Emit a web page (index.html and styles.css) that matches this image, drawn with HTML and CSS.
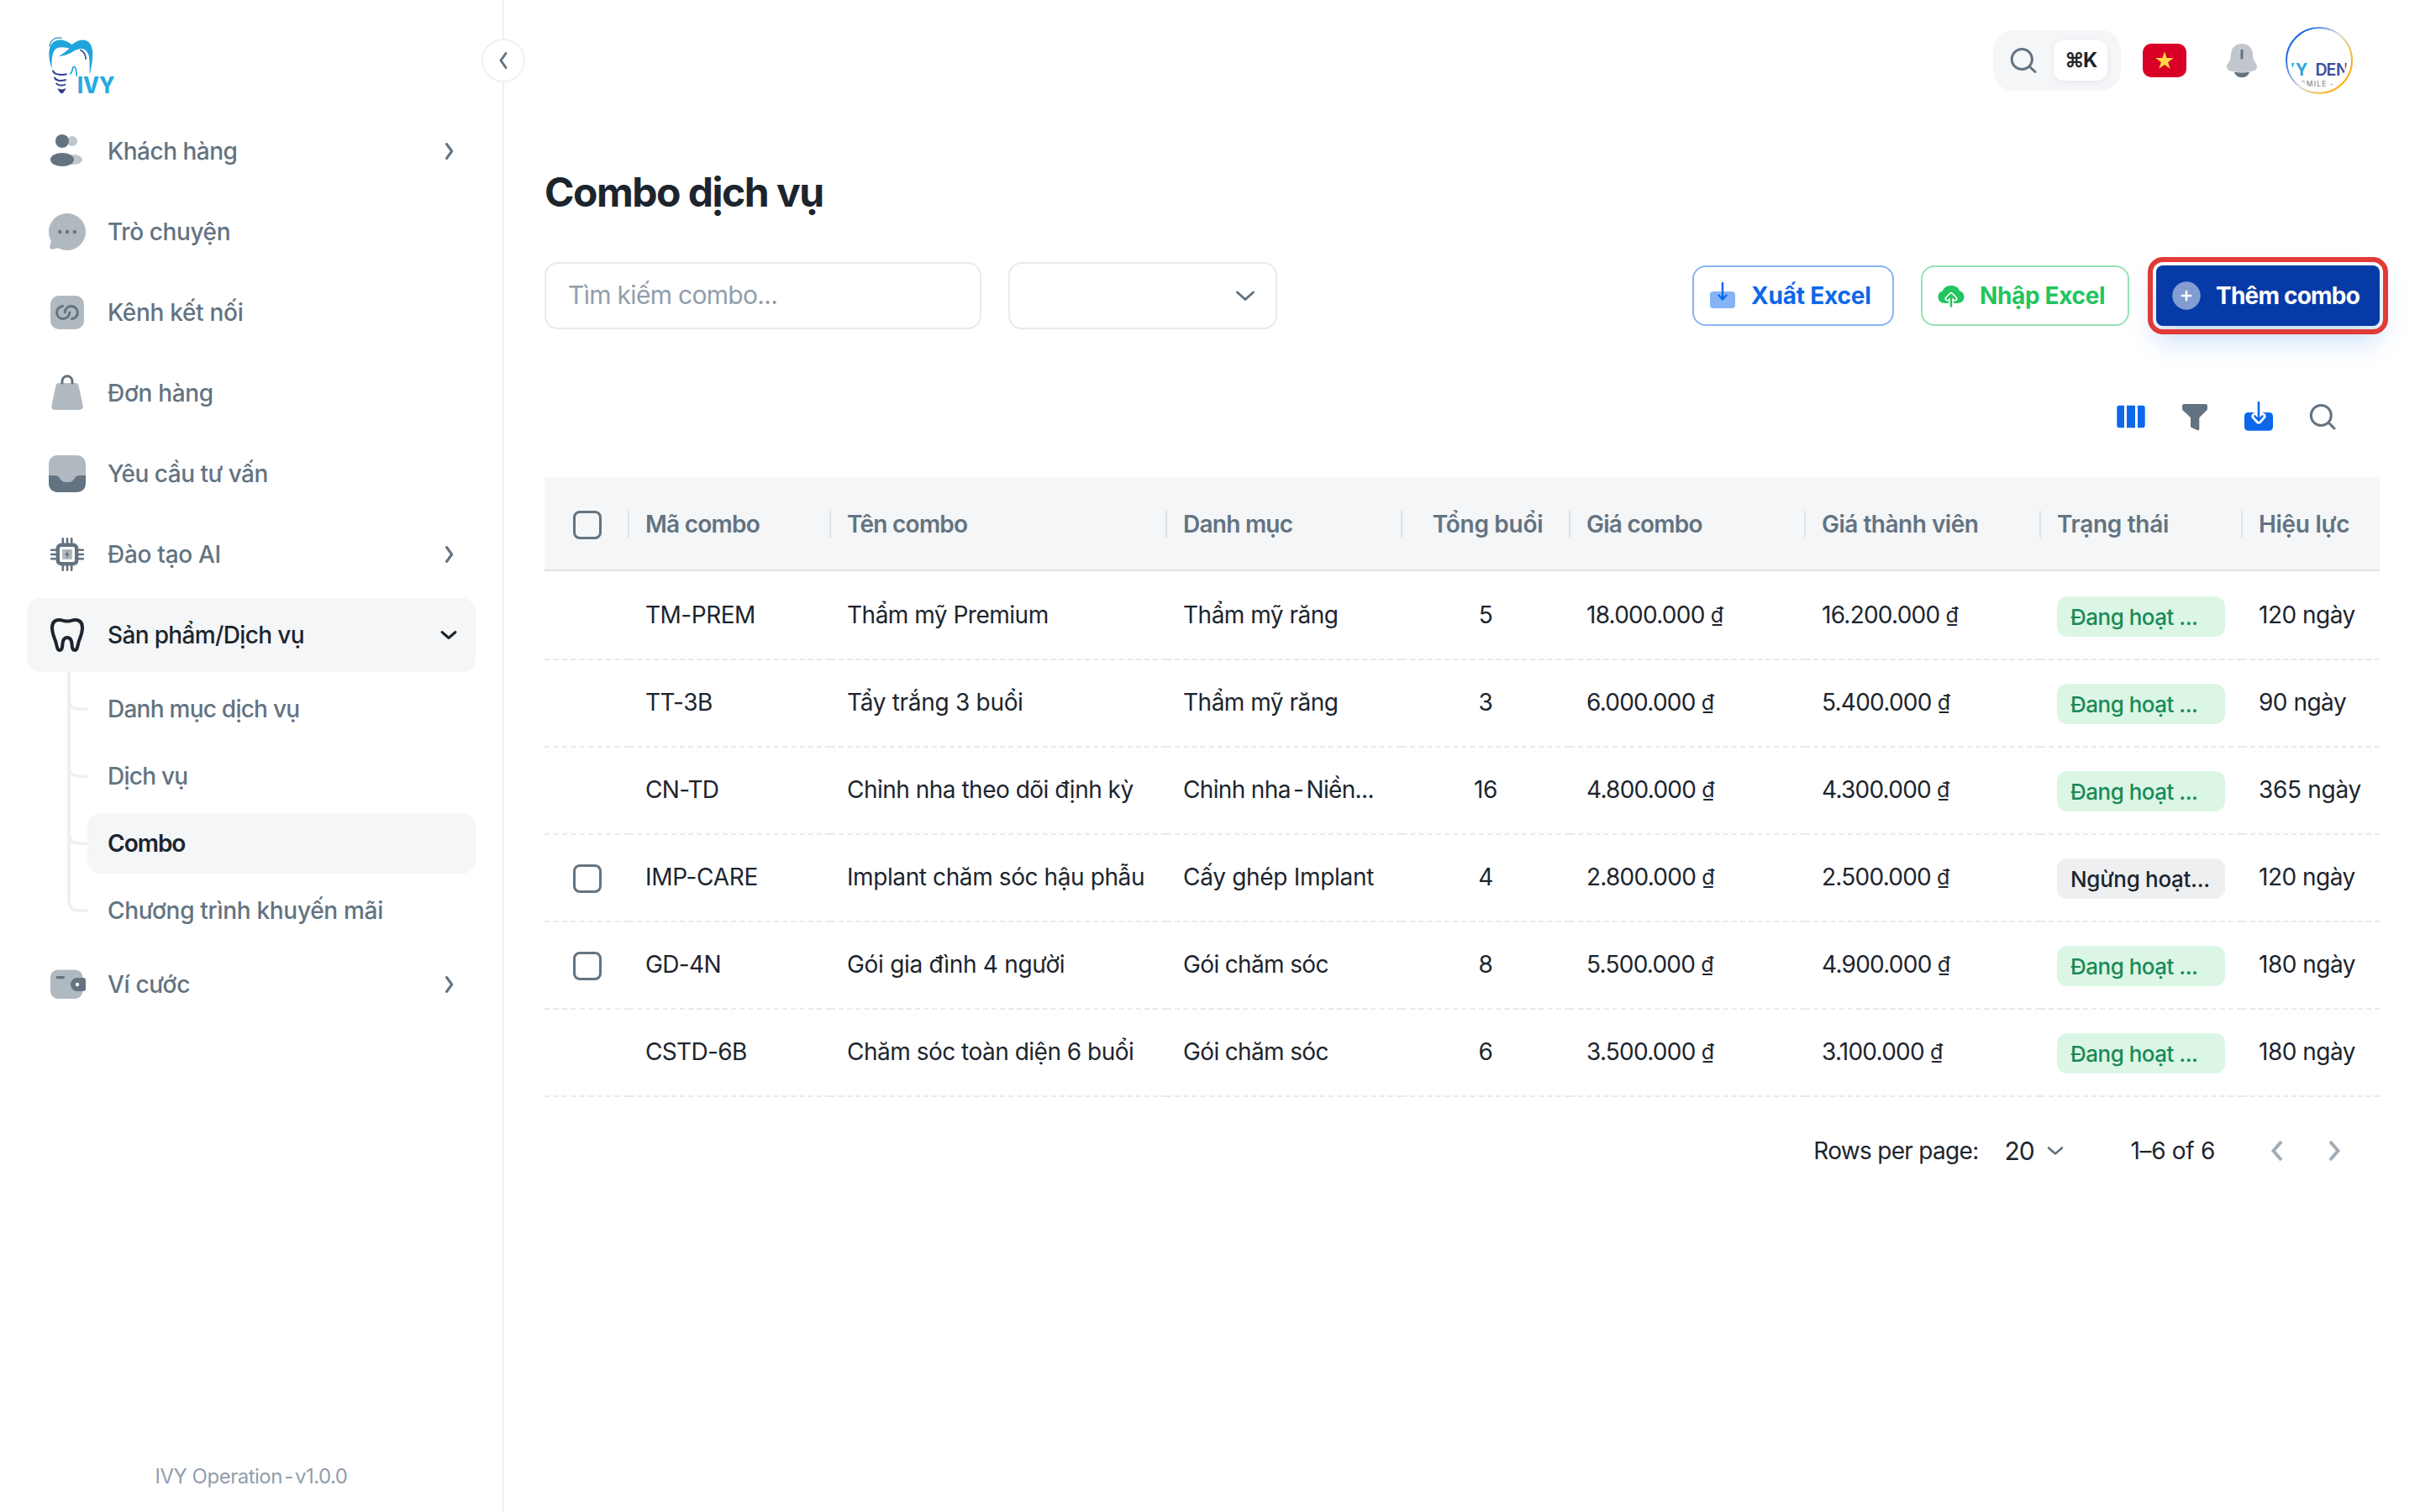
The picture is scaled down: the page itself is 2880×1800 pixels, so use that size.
FILE: index.html
```html
<!DOCTYPE html>
<html lang="vi">
<head>
<meta charset="utf-8">
<title>Combo dịch vụ</title>
<link rel="stylesheet" href="styles.css">
</head>
<body>
<div class="app">
  <aside class="sidebar">
    <svg class="logo" viewBox="0 0 300 252">
      <path fill="#1ea5dc" d="M42 138C27 100 26 55 50 40c22-12 46-2 62 12 20-18 44-24 61-10 19 18 17 62 3 116 0-46 2-72-14-86-20-16-42 4-62 13-12 6-26 9-34 7 16-6 24-18 38-26-14-5-42-10-54 6-10 18-10 43-8 66z"/>
      <path fill="none" stroke="#2a93b8" stroke-width="4" d="M33 58c3-22 20-36 44-30"/>
      <path fill="none" stroke="#2f4b9b" stroke-width="5" d="M142 70c13 6 20 18 21 34"/>
      <path fill="none" stroke="#1ea5dc" stroke-width="5" d="M106 156c10-6 8-26 14-26s9 14 10 34"/>
      <path fill="none" stroke="#2f3f8f" stroke-width="6" d="M45 143c1 15 24 18 50 14M50 168c6 13 24 14 42 9M56 189c8 10 22 9 34 5"/>
      <path fill="#2f3f8f" d="M61 207c10 5 20 5 31-1-5 12-11 20-16 20-6-2-11-10-15-19z"/>
      <text class="logo-word" x="132" y="226" textLength="134" lengthAdjust="spacingAndGlyphs">IVY</text>
    </svg>
    <nav class="nav">
      <a class="item"><svg class="ico" viewBox="0 0 24 24"><g opacity=".4"><circle cx="15" cy="6" r="3"/><ellipse cx="16" cy="17" rx="5" ry="3"/></g><circle cx="9" cy="6" r="4"/><ellipse cx="9" cy="17" rx="7" ry="4"/></svg><span>Khách hàng</span><svg class="chev" viewBox="0 0 32 32"><path d="M13.500 7.500l6.200 8.500-6.200 8.500"/></svg></a>
      <a class="item"><svg class="ico" viewBox="0 0 24 24"><g transform="translate(-1.2 -1.2) scale(1.1)"><path opacity=".5" d="M12 22c5.523 0 10-4.477 10-10S17.523 2 12 2 2 6.477 2 12c0 1.6.376 3.112 1.043 4.453.178.356.237.763.134 1.148l-.595 2.226a1.3 1.3 0 0 0 1.591 1.592l2.226-.596a1.63 1.63 0 0 1 1.149.133A9.96 9.96 0 0 0 12 22"/><circle cx="8" cy="12" r="1"/><circle cx="12" cy="12" r="1"/><circle cx="16" cy="12" r="1"/></g></svg><span class="t1">Trò chuyện</span></a>
      <a class="item"><svg class="ico" viewBox="0 0 24 24"><rect opacity=".5" x="2" y="2" width="20" height="20" rx="5"/><path class="ln" d="M9.200 8.200A3.800 3.800 0 1 0 13.400 12M14.800 15.800A3.800 3.800 0 1 0 10.600 12"/></svg><span class="t0">Kênh kết nối</span></a>
      <a class="item"><svg class="ico" viewBox="0 0 24 24"><path opacity=".5" d="M7.200 6h9.600c1.200 0 1.800.6 2 1.600l2.500 11.800c.3 1.600-.5 2.600-2.200 2.600H4.900c-1.700 0-2.500-1-2.200-2.600L5.200 7.600c.2-1 .8-1.600 2-1.600z"/><path class="ln" d="M9 6V4.900a3 3 0 0 1 6 0V6"/></svg><span class="t0">Đơn hàng</span></a>
      <a class="item"><svg class="ico" viewBox="0 0 24 24"><rect opacity=".5" x="1" y="1" width="22" height="22" rx="5"/><path d="M1 13h3.500c1.300 0 2 .4 2.700 1.300l1.300 1.600c.7.8 1.300 1.100 2.300 1.100h2.400c1 0 1.600-.3 2.300-1.100l1.300-1.600c.7-.9 1.400-1.300 2.700-1.300H23v4c0 4-2 6-6 6H7c-4 0-6-2-6-6z"/></svg><span>Yêu cầu tư vấn</span></a>
      <a class="item"><svg class="ico" viewBox="0 0 24 24"><rect x="6.400" y="6.400" width="11.200" height="11.200" rx="2" fill="none" stroke="#637381" stroke-width="2.200"/><path class="ln pins" d="M9.400 2.600v3M12 2.600v3M14.600 2.600v3M9.400 18.400v3M12 18.400v3M14.600 18.400v3M2.600 9.400h3M2.600 12h3M2.600 14.600h3M18.400 9.400h3M18.400 12h3M18.400 14.600h3"/><rect opacity=".5" x="9" y="9" width="6" height="6" rx=".5"/><path d="M12.600 9.400l-2.100 3h1.300l-.5 2.300 2.200-3.100h-1.300z"/></svg><span class="t0">Đào tạo AI</span><svg class="chev" viewBox="0 0 32 32"><path d="M13.500 7.500l6.200 8.500-6.200 8.500"/></svg></a>
      <a class="item open"><svg class="ico" viewBox="0 0 24 24"><path fill="none" stroke="#1c252e" stroke-width="2" stroke-linejoin="round" d="M7.200 3C4 3 3 5.300 3 7.800c0 3.700 1.500 5.700 2.300 8.700.6 2.500.8 4.500 2.200 4.500 1.600 0 1.500-1.800 1.800-4.200.2-1.900 1-3.300 2.700-3.300s2.500 1.400 2.700 3.300c.3 2.400.2 4.200 1.800 4.200 1.400 0 1.600-2 2.200-4.500.8-3 2.300-5 2.300-8.700C21 5.300 20 3 16.800 3c-1.900 0-3 .8-4.800.8S9.100 3 7.200 3z"/></svg><span class="t3">Sản phẩm/Dịch vụ</span><svg class="chev" viewBox="0 0 32 32"><path d="M8 12.500l8 7 8-7"/></svg></a>
      <div class="sub">
        <a class="subitem"><svg class="branch" viewBox="0 0 24 16"><path d="M2 0c0 8 4 12 12 12h10"/></svg><span class="t2">Danh mục dịch vụ</span></a>
        <a class="subitem"><svg class="branch" viewBox="0 0 24 16"><path d="M2 0c0 8 4 12 12 12h10"/></svg><span class="t2">Dịch vụ</span></a>
        <a class="subitem current"><svg class="branch" viewBox="0 0 24 16"><path d="M2 0c0 8 4 12 12 12h10"/></svg><span>Combo</span></a>
        <a class="subitem"><svg class="branch" viewBox="0 0 24 16"><path d="M2 0c0 8 4 12 12 12h10"/></svg><span class="t0">Chương trình khuyến mãi</span></a>
      </div>
      <a class="item"><svg class="ico" viewBox="0 0 24 24"><rect opacity=".5" x="2" y="3.200" width="19.200" height="17.300" rx="4.500"/><path d="M6 7h3.800a.8.8 0 0 1 0 1.600H6A.8.8 0 0 1 6 7zM18 8h3.500c.9 0 1.500.6 1.500 1.500v5c0 .9-.6 1.500-1.500 1.500H18a4 4 0 0 1 0-8z"/><circle cx="18" cy="12" r="1.100" fill="#fff"/></svg><span class="t0">Ví cước</span><svg class="chev" viewBox="0 0 32 32"><path d="M13.500 7.500l6.200 8.500-6.200 8.500"/></svg></a>
    </nav>
    <footer class="version">IVY Operation<span class="dash"> - </span>v1.0.0</footer>
    <button class="toggle"><svg viewBox="0 0 32 32"><path d="M19 7.500L13 16l6 8.500"/></svg></button>
  </aside>

  <div class="page">
    <header class="topbar">
      <div class="search"><svg class="mag" viewBox="0 0 40 40"><circle cx="18.300" cy="18.500" r="12.100"/><path d="M27 27l7 6.500"/></svg><kbd>⌘K</kbd></div>
      <svg class="flag" viewBox="0 0 52 40"><rect width="52" height="40" rx="10" fill="#d80027"/><path fill="#ffda44" d="M26 9.300l2.500 7.800h8.200l-6.600 4.800 2.500 7.800-6.600-4.800-6.600 4.800 2.500-7.800-6.600-4.800h8.200z"/></svg>
      <svg class="bell" viewBox="0 0 48 48"><path fill="#c1c7cd" d="M24 4c7.500 0 12.500 5 13 12 .4 5 .6 7.500 3 10.500 3.500 4.500 2.300 9.300-3.500 10.300-8 1.600-17 1.600-25 0-5.800-1-7-5.800-3.500-10.300 2.400-3 2.600-5.500 3-10.500C11.500 9 16.500 4 24 4z"/><path fill="#637381" d="M15 37.800c6 .8 12 .8 18 0-1 4-4.500 6.400-9 6.400s-8-2.400-9-6.400z"/><path stroke="#637381" stroke-width="3" stroke-linecap="round" d="M24 12v9"/></svg>
      <svg class="avatar" viewBox="0 0 80 80">
        <defs><linearGradient id="ring" x1=".1" y1=".2" x2=".9" y2=".8"><stop offset=".05" stop-color="#1668e3"/><stop offset=".5" stop-color="#dcdcda"/><stop offset=".95" stop-color="#ffab00"/></linearGradient><clipPath id="disc"><circle cx="40" cy="40" r="33"/></clipPath></defs>
        <circle cx="40" cy="40" r="39" fill="#fff" stroke="url(#ring)" stroke-width="2"/>
        <g clip-path="url(#disc)"><text class="av-cyan" x="-4 12" y="58">VY</text><text class="av-navy" x="35.500 48.500 60" y="58">DEN</text><text class="av-gray" x="18" y="70.500">SMILE -</text></g>
      </svg>
    </header>

    <main class="content">
      <h1>Combo dịch vụ</h1>
      <div class="filters">
        <div class="field query">Tìm kiếm combo...</div>
        <div class="field select"><svg viewBox="0 0 32 32"><path d="M6.500 12l9.500 8.500 9.500-8.500"/></svg></div>
        <div class="actions">
          <button class="btn export"><svg viewBox="0 0 40 40"><rect opacity=".5" x="5" y="15" width="30" height="20" rx="4"/><path fill="none" stroke="currentColor" stroke-width="2.400" stroke-linecap="round" stroke-linejoin="round" d="M20 5v19M15.500 19.500l4.500 5 4.500-5"/></svg>Xuất Excel</button>
          <button class="btn import"><svg viewBox="0 0 40 40"><path d="M12.500 29C8 29 4.500 26 4.500 21.500c0-3.700 2.300-6.300 5.500-7.200C10.800 10.500 15 8 20 8s9.200 2.500 10 6.300c3.200.9 5.500 3.500 5.500 7.200 0 4.500-3.500 7.500-8 7.500z"/><path fill="none" stroke="#fff" stroke-width="6" stroke-linecap="round" stroke-linejoin="round" d="M20 32V20M15.500 23.500L20 19l4.500 4.500"/><path fill="none" stroke="currentColor" stroke-width="2.600" stroke-linecap="round" stroke-linejoin="round" d="M20 32.500V20M15.500 23.500L20 19l4.500 4.500"/></svg>Nhập Excel</button>
          <button class="btn add"><svg viewBox="0 0 40 40"><circle opacity=".5" cx="20" cy="20" r="16.700"/><path stroke="#fff" stroke-width="2.500" stroke-linecap="round" d="M20 14.700v10.600M14.700 20h10.600"/></svg>Thêm combo</button>
        </div>
      </div>

      <div class="toolbar">
        <svg class="blue" viewBox="0 0 40 40"><path d="M12 6.700v26.600H6a2.700 2.700 0 0 1-2.700-2.700V9.400A2.700 2.700 0 0 1 6 6.700zM15 6.700h10v26.600H15zM28 6.700h6a2.700 2.700 0 0 1 2.700 2.700v21.200a2.700 2.700 0 0 1-2.700 2.700h-6z"/></svg>
        <svg viewBox="0 0 40 40"><path d="M7 5h26q2 0 2 2v3.500c0 1-.3 1.700-1 2.300l-7 6.700c-1.200 1-1.700 1.700-1.700 3v12.500c0 1-.8 1.500-1.800 1.200l-7-3c-1-.4-1.500-1-1.500-2v-8.700c0-1.300-.5-2-1.700-3L6 12.800c-.7-.6-1-1.300-1-2.300V7q0-2 2-2z"/></svg>
        <svg class="blue" viewBox="0 0 40 40"><rect x="3" y="15" width="34" height="21.700" rx="4.500"/><path fill="none" stroke="#fff" stroke-width="8" stroke-linecap="round" stroke-linejoin="round" d="M20 16v8.500M15.500 19.500l4.500 5 4.500-5"/><path fill="none" stroke="currentColor" stroke-width="2.600" stroke-linecap="round" stroke-linejoin="round" d="M20 3v21.500M15.500 19.500l4.500 5 4.500-5"/></svg>
        <svg class="mag" viewBox="0 0 40 40"><circle cx="18.300" cy="18.500" r="12"/><path d="M27 27l7 7"/></svg>
      </div>

      <div class="table">
        <div class="row head"><div><i class="box"></i></div><div class="t2">Mã combo</div><div class="t2">Tên combo</div><div class="t2">Danh mục</div><div class="num t0">Tổng buổi</div><div class="t2">Giá combo</div><div>Giá thành viên</div><div class="t0">Trạng thái</div><div class="t0">Hiệu lực</div></div>
        <div class="row first"><div></div><div>TM-PREM</div><div>Thẩm mỹ Premium</div><div>Thẩm mỹ răng</div><div class="num">5</div><div class="t2">18.000.000 <small>₫</small></div><div class="t2">16.200.000 <small>₫</small></div><div><b class="tag">Đang hoạt ...</b></div><div>120 ngày</div></div>
        <div class="row"><div></div><div>TT-3B</div><div class="t0">Tẩy trắng 3 buổi</div><div>Thẩm mỹ răng</div><div class="num">3</div><div class="t2">6.000.000 <small>₫</small></div><div class="t2">5.400.000 <small>₫</small></div><div><b class="tag">Đang hoạt ...</b></div><div>90 ngày</div></div>
        <div class="row"><div></div><div class="t3">CN-TD</div><div>Chỉnh nha theo dõi định kỳ</div><div class="t3">Chỉnh nha<span class="dash"> - </span>Niền...</div><div class="num">16</div><div class="t2">4.800.000 <small>₫</small></div><div class="t2">4.300.000 <small>₫</small></div><div><b class="tag">Đang hoạt ...</b></div><div class="t0">365 ngày</div></div>
        <div class="row"><div><i class="box"></i></div><div class="t0">IMP-CARE</div><div class="t1">Implant chăm sóc hậu phẫu</div><div class="t0">Cấy ghép Implant</div><div class="num">4</div><div class="t2">2.800.000 <small>₫</small></div><div class="t2">2.500.000 <small>₫</small></div><div><b class="tag off t0">Ngừng hoạt...</b></div><div>120 ngày</div></div>
        <div class="row"><div><i class="box"></i></div><div class="t3">GD-4N</div><div class="t0">Gói gia đình 4 người</div><div class="t3">Gói chăm sóc</div><div class="num">8</div><div class="t2">5.500.000 <small>₫</small></div><div class="t2">4.900.000 <small>₫</small></div><div><b class="tag">Đang hoạt ...</b></div><div>180 ngày</div></div>
        <div class="row"><div></div><div class="t3">CSTD-6B</div><div>Chăm sóc toàn diện 6 buổi</div><div class="t3">Gói chăm sóc</div><div class="num">6</div><div class="t2">3.500.000 <small>₫</small></div><div class="t2">3.100.000 <small>₫</small></div><div><b class="tag">Đang hoạt ...</b></div><div>180 ngày</div></div>
        <div class="row end"><div></div><div></div><div></div><div></div><div></div><div></div><div></div><div></div><div></div></div>
      </div>

      <div class="pager">
        <span class="rpp">Rows per page:</span>
        <span class="size">20</span>
        <svg class="caret" viewBox="0 0 24 24"><path d="M4 8.500l8 7 8-7"/></svg>
        <span class="range">1–6 of 6</span>
        <svg class="arrow" viewBox="0 0 40 40"><path d="M25 9L15.500 20 25 31"/></svg>
        <svg class="arrow" viewBox="0 0 40 40"><path d="M15 9l9.500 11L15 31"/></svg>
      </div>
    </main>
  </div>
</div>
</body>
</html>
```
FILE: styles.css
```css
* { box-sizing: border-box; }
body {
  margin: 0;
  background: #fff;
  color: #1c252e;
  font: 400 28px/44px Inter, "Noto Sans", sans-serif;
  letter-spacing: -0.5px;
}
svg { display: block; flex: none; }
button { font: inherit; letter-spacing: inherit; }
.app { display: flex; width: 2880px; height: 1800px; overflow: hidden; }
.t0 { letter-spacing: -0.3px; }
.t1 { letter-spacing: -0.4px; }
.t2 { letter-spacing: -0.75px; }
.t3 { letter-spacing: -0.65px; }
.dash { word-spacing: -4px; }

/* Sidebar */
.sidebar {
  position: relative;
  display: flex;
  flex-direction: column;
  width: 600px;
  flex: none;
  padding: 36px 32px 24px;
  border-right: 2px solid #eff1f3;
}
.logo { width: 100px; height: 84px; margin-left: 16px; }
.logo-word { font: 800 80px Inter, sans-serif; fill: #2aa9df; letter-spacing: 0; }
.nav { display: flex; flex-direction: column; gap: 8px; margin-top: 16px; }
.item {
  display: flex;
  align-items: center;
  gap: 24px;
  height: 88px;
  padding: 0 16px 0 24px;
  border-radius: 16px;
  color: #637381;
  font-weight: 500;
}
.ico { width: 48px; height: 48px; fill: #637381; }
.ln { fill: none; stroke: #637381; stroke-width: 1.5; stroke-linecap: round; }
.pins { stroke-width: 1.3; }
.chev { width: 32px; height: 32px; margin-left: auto; }
.chev path, .toggle path {
  fill: none;
  stroke: currentColor;
  stroke-width: 3;
  stroke-linecap: round;
  stroke-linejoin: round;
}
.item.open { background: #f4f6f8; color: #1c252e; }
.sub { position: relative; display: flex; flex-direction: column; gap: 8px; padding-left: 72px; }
.sub::before {
  content: "";
  position: absolute;
  left: 48px;
  top: -8px;
  width: 4px;
  height: 272px;
  background: #edeff2;
}
.subitem {
  position: relative;
  display: flex;
  align-items: center;
  height: 72px;
  padding-left: 24px;
  border-radius: 16px;
  color: #637381;
  font-weight: 500;
}
.branch { position: absolute; left: -24px; top: 24px; width: 24px; height: 16px; overflow: visible; }
.branch path { fill: none; stroke: #edeff2; stroke-width: 3.5; }
.subitem.current { background: #f4f6f8; color: #1c252e; font-weight: 600; letter-spacing: -1px; }
.version {
  margin-top: auto;
  text-align: center;
  font-size: 24px;
  line-height: 36px;
  letter-spacing: -0.5px;
  color: #919eab;
}
.toggle {
  position: absolute;
  top: 46px;
  right: -27px;
  display: grid;
  place-items: center;
  width: 52px;
  height: 52px;
  padding: 0;
  border: 2px solid #eff1f3;
  border-radius: 50%;
  background: #fff;
  color: #637381;
}
.toggle svg { width: 32px; height: 32px; }

/* Top bar */
.page { flex: 1; min-width: 0; }
.topbar { display: flex; align-items: center; justify-content: flex-end; height: 144px; padding-right: 80px; }
.search {
  display: flex;
  align-items: center;
  justify-content: space-between;
  width: 152px;
  height: 72px;
  padding: 0 16px;
  border-radius: 24px;
  background: #f5f6f8;
}
.mag { width: 40px; height: 40px; fill: none; stroke: #637381; stroke-width: 3; stroke-linecap: round; }
kbd {
  width: 64px;
  height: 48px;
  border-radius: 12px;
  background: #fff;
  box-shadow: 0 2px 6px rgba(145, 158, 171, .16);
  font: 700 24px/48px Inter, "DejaVu Sans", sans-serif;
  letter-spacing: -1.6px;
  text-align: center;
}
.flag { width: 52px; height: 40px; margin-left: 26px; }
.bell { width: 48px; height: 48px; margin-left: 42px; }
.avatar { width: 80px; height: 80px; margin-left: 28px; }
.av-cyan, .av-navy { font: 600 19.500px Inter, sans-serif; letter-spacing: 0; }
.av-cyan { font-weight: 700; fill: #28a5da; }
.av-navy { fill: #3c4f9c; }
.av-gray { font: 500 8.500px Inter, sans-serif; letter-spacing: 1.2px; fill: #8a8a8f; }

/* Content */
.content { padding: 49px 48px 0; }
h1 { margin: 0 0 47px; font-size: 48px; line-height: 72px; font-weight: 700; letter-spacing: -1.5px; }
.filters { display: flex; align-items: center; gap: 32px; height: 80px; }
.field { height: 80px; border: 2px solid #e7eaed; border-radius: 16px; }
.query { width: 520px; padding: 0 26px; font-size: 30px; line-height: 75px; letter-spacing: -.7px; color: #919eab; }
.select { display: flex; align-items: center; justify-content: flex-end; width: 320px; padding-right: 20px; }
.select svg { width: 32px; height: 32px; fill: none; stroke: #637381; stroke-width: 3; stroke-linecap: round; stroke-linejoin: round; }
.actions { display: flex; gap: 32px; margin-left: auto; }
.btn {
  display: flex;
  align-items: center;
  gap: 14px;
  height: 72px;
  padding: 0 14px;
  border: 2px solid;
  border-radius: 16px;
  background: #fff;
  font-weight: 700;
  letter-spacing: -.2px;
  white-space: nowrap;
}
.btn svg { width: 40px; height: 40px; fill: currentColor; }
.export { width: 240px; border-color: #8ab3f5; color: #0c68e9; }
.import { width: 248px; border-color: #95e2b3; color: #22c55e; letter-spacing: -.35px; }
.add {
  gap: 15px;
  width: 266px;
  border: 0;
  padding: 0 16px;
  border-radius: 8px;
  background: #063ba7;
  color: #fff;
  letter-spacing: -.8px;
  outline: 6px solid #e23a36;
  outline-offset: 4px;
  box-shadow: 0 16px 32px rgba(12, 104, 233, .24);
}
.toolbar { display: flex; justify-content: flex-end; gap: 36px; margin-top: 84px; padding-right: 48px; }
.toolbar svg { width: 40px; height: 40px; fill: #637381; color: #0c68e9; }
.toolbar .blue { fill: #0c68e9; }
.toolbar .mag { fill: none; }

/* Table */
.table { margin-top: 52px; }
.row {
  display: grid;
  grid-template-columns: 100px 240px 400px 280px 200px 280px 280px 240px 164px;
  height: 104px;
}
.row > div {
  display: flex;
  align-items: center;
  padding: 0 20px;
  border-top: 2px dashed #e7eaed;
  border-bottom: 2px solid transparent;
  white-space: pre;
}
.row > div:first-child { padding: 0 0 0 34px; }
.row > .num { justify-content: center; }
.row small { font-size: 25px; }
.head { height: 112px; background: #f4f6f8; color: #637381; font-weight: 600; border-bottom: 2px solid #dfe2e5; }
.head > div { position: relative; border: 0; padding-top: 2px; }
.head > div:not(:last-child)::after {
  content: "";
  position: absolute;
  right: -1px;
  top: 40px;
  width: 2px;
  height: 32px;
  background: #dfe3e6;
}
.head > .num { padding-left: 25px; }
.first > div { border-top-color: transparent; }
.end { height: 2px; }
.end > div { border-bottom: 0; }
.box { width: 34px; height: 34px; border: 3px solid #637381; border-radius: 8px; margin-top: 3px; }
.tag {
  width: 200px;
  height: 48px;
  margin-top: 4px;
  padding: 0 16px;
  border-radius: 12px;
  background: #dbf6e5;
  color: #1a8a58;
  font-size: 26px;
  font-weight: 500;
  line-height: 50px;
}
.tag.off { background: #edeff1; color: #1c252e; }

/* Pagination */
.pager { display: flex; align-items: center; height: 128px; padding-right: 34px; }
.rpp { margin-left: auto; letter-spacing: -.7px; }
.size { margin-left: 31px; font-size: 30px; letter-spacing: -1.2px; }
.caret { width: 24px; height: 24px; margin-left: 14px; fill: none; stroke: #637381; stroke-width: 2.6; stroke-linecap: round; stroke-linejoin: round; }
.range { margin: 0 54px 0 77px; letter-spacing: -.3px; }
.arrow { width: 40px; height: 40px; fill: none; stroke: #a3adb7; stroke-width: 4; }
.arrow + .arrow { margin-left: 28px; }
```
